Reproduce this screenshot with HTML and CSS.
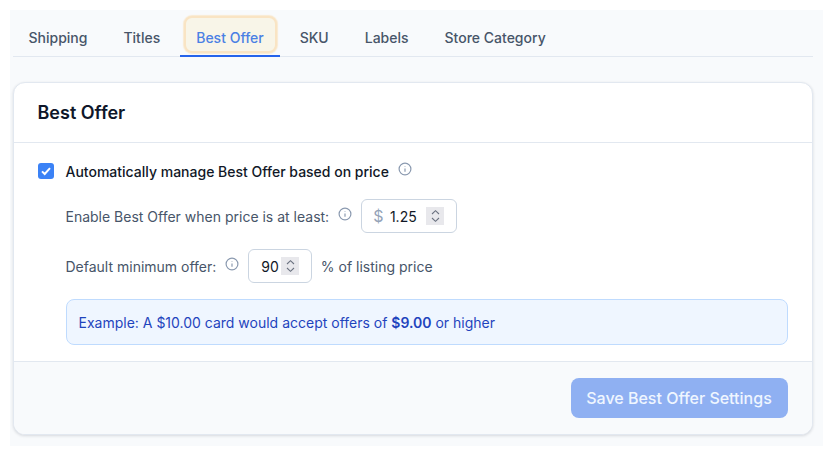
FILE: index.html
```html
<!DOCTYPE html>
<html lang="en">
<head>
    <meta charset="UTF-8">
    <meta name="viewport" content="width=device-width, initial-scale=1.0">
    <title>Best Offer</title>
    <link rel="stylesheet" href="styles.css">
</head>
<body>
    <div class="panel">
        <nav class="tabs">
            <a class="tab">Shipping</a>
            <a class="tab">Titles</a>
            <a class="tab active"><span class="glow"></span><span class="tab-label">Best Offer</span></a>
            <a class="tab">SKU</a>
            <a class="tab">Labels</a>
            <a class="tab">Store Category</a>
        </nav>

        <section class="card">
            <header class="card-head">
                <h2>Best Offer</h2>
            </header>
            <div class="card-body">
                <div class="row-main">
                    <span class="checkbox">
                        <svg width="12" height="12" viewBox="0 0 12 12"><path d="M2 6.4 4.7 9 10 3.2" fill="none" stroke="#fff" stroke-width="2"/></svg>
                    </span>
                    <span class="main-label">Automatically manage Best Offer based on price</span>
                    <svg class="info info-main" viewBox="0 0 14 14"><circle cx="7" cy="7" r="5.9"/><path d="M7 6.4v3.4M7 4.1v.5"/></svg>
                </div>
                <div class="row-sub">
                    <span>Enable Best Offer when price is at least:</span>
                    <svg class="info" viewBox="0 0 14 14"><circle cx="7" cy="7" r="5.9"/><path d="M7 6.4v3.4M7 4.1v.5"/></svg>
                    <div class="num-field price-field">
                        <span class="dollar">$</span>
                        <span class="num-value">1.25</span>
                        <span class="spinner">
                            <svg width="9" height="14" viewBox="0 0 9 14"><path d="M1 5 4.5 1.7 8 5M1 9l3.5 3.3L8 9" fill="none" stroke="#6b7280" stroke-width="1.1"/></svg>
                        </span>
                    </div>
                </div>
                <div class="row-sub">
                    <span>Default minimum offer:</span>
                    <svg class="info" viewBox="0 0 14 14"><circle cx="7" cy="7" r="5.9"/><path d="M7 6.4v3.4M7 4.1v.5"/></svg>
                    <div class="num-field percent-field">
                        <span class="num-value">90</span>
                        <span class="spinner">
                            <svg width="9" height="14" viewBox="0 0 9 14"><path d="M1 5 4.5 1.7 8 5M1 9l3.5 3.3L8 9" fill="none" stroke="#6b7280" stroke-width="1.1"/></svg>
                        </span>
                    </div>
                    <span class="suffix">% of listing price</span>
                </div>
                <div class="example"><p>Example: A $10.00 card would accept offers of <strong>$9.00</strong> or higher</p></div>
            </div>
            <footer class="card-foot">
                <button class="save-btn" disabled>Save Best Offer Settings</button>
            </footer>
        </section>
    </div>
</body>
</html>
```

FILE: styles.css
```css
* {
    box-sizing: border-box;
}
body {
    margin: 0;
    padding: 10px;
    background: #fff;
    font-family: Inter, "Liberation Sans", sans-serif;
    font-size: 14px;
    color: #374151;
}
.panel {
    width: 813px;
    height: 436px;
    padding: 0 10.5px 0 2.5px;
    background: #f8fafc;
}
.tabs {
    display: flex;
    gap: 4px;
    height: 47px;
    padding-top: 7px;
    border-bottom: 1px solid #e2e8f0;
}
.tab {
    position: relative;
    height: 40px;
    padding: 0 16px;
    line-height: 41px;
    font-weight: 500;
    color: #475569;
    white-space: nowrap;
}
.tab.active {
    border-bottom: 2px solid #2563eb;
    color: #4a80e4;
}
.tab-label {
    position: relative;
}
.glow {
    position: absolute;
    left: 4px;
    right: 3px;
    top: -1px;
    bottom: 2px;
    background: #f8f5e8;
    border: 2px solid #f9e4c4;
    border-radius: 8px;
    box-shadow: 0 0 1px 1px #f9ead2;
}
.card {
    margin-top: 25px;
    height: 353px;
    background: #fff;
    border: 1px solid #e2e8f0;
    border-radius: 12px;
    box-shadow: 0 1px 3px rgba(15, 23, 42, 0.14);
    overflow: hidden;
}
.card-head {
    height: 60px;
    padding: 0 24px;
    display: flex;
    align-items: center;
    border-bottom: 1px solid #e2e8f0;
}
h2 {
    margin: 0;
    font-size: 18px;
    font-weight: 600;
    color: #0f172a;
}
.card-body {
    height: 218px;
    padding: 18px 24px 0;
}
.row-main {
    display: flex;
    align-items: center;
    height: 20px;
}
.checkbox {
    width: 16px;
    height: 16px;
    margin-right: 12px;
    display: flex;
    align-items: center;
    justify-content: center;
    background: #3b82f6;
    border-radius: 3px;
}
.main-label {
    font-weight: 500;
    color: #111827;
}
.info {
    width: 14px;
    height: 14px;
    margin-left: 9px;
    margin-top: -4px;
    fill: none;
    stroke: #8b9ab0;
    stroke-width: 1.2;
}
.row-sub {
    display: flex;
    align-items: center;
    height: 34px;
    margin-left: 28px;
    margin-top: 16px;
    color: #475569;
}
.row-main + .row-sub {
    margin-top: 18px;
}
.num-field {
    display: flex;
    align-items: center;
    height: 34px;
    margin-left: 9px;
    background: #fff;
    border: 1px solid #cbd5e1;
    border-radius: 6px;
    color: #111827;
}
.price-field {
    width: 96px;
    padding-left: 11px;
}
.percent-field {
    width: 64px;
    padding-left: 12px;
}
.dollar {
    font-size: 16px;
    color: #94a3b8;
    margin-right: 6.5px;
}
.num-value {
    width: 27.5px;
}
.percent-field .num-value {
    width: 20px;
}
.price-field .spinner {
    margin-left: 9px;
}
.spinner {
    width: 18px;
    height: 18px;
    display: flex;
    align-items: center;
    justify-content: center;
    background: #e8e8ec;
}
.suffix {
    margin-left: 8.5px;
}
.example {
    margin: 16px 0 0 28px;
    height: 46px;
    padding: 0 12px;
    display: flex;
    align-items: center;
    background: #eff6ff;
    border: 1px solid #bfdbfe;
    border-radius: 8px;
    color: #1f44bd;
}
.example p {
    margin: 0;
}
.example strong {
    font-weight: 600;
}
.card-foot {
    height: 74px;
    padding: 16px 24px;
    display: flex;
    justify-content: flex-end;
    background: #f8fafc;
    border-top: 1px solid #e2e8f0;
}
.save-btn {
    width: 217px;
    height: 40px;
    padding: 0;
    border: none;
    border-radius: 8px;
    background: #8fb0f2;
    color: #eff6ff;
    font-family: inherit;
    font-size: 16px;
    font-weight: 500;
}
```
